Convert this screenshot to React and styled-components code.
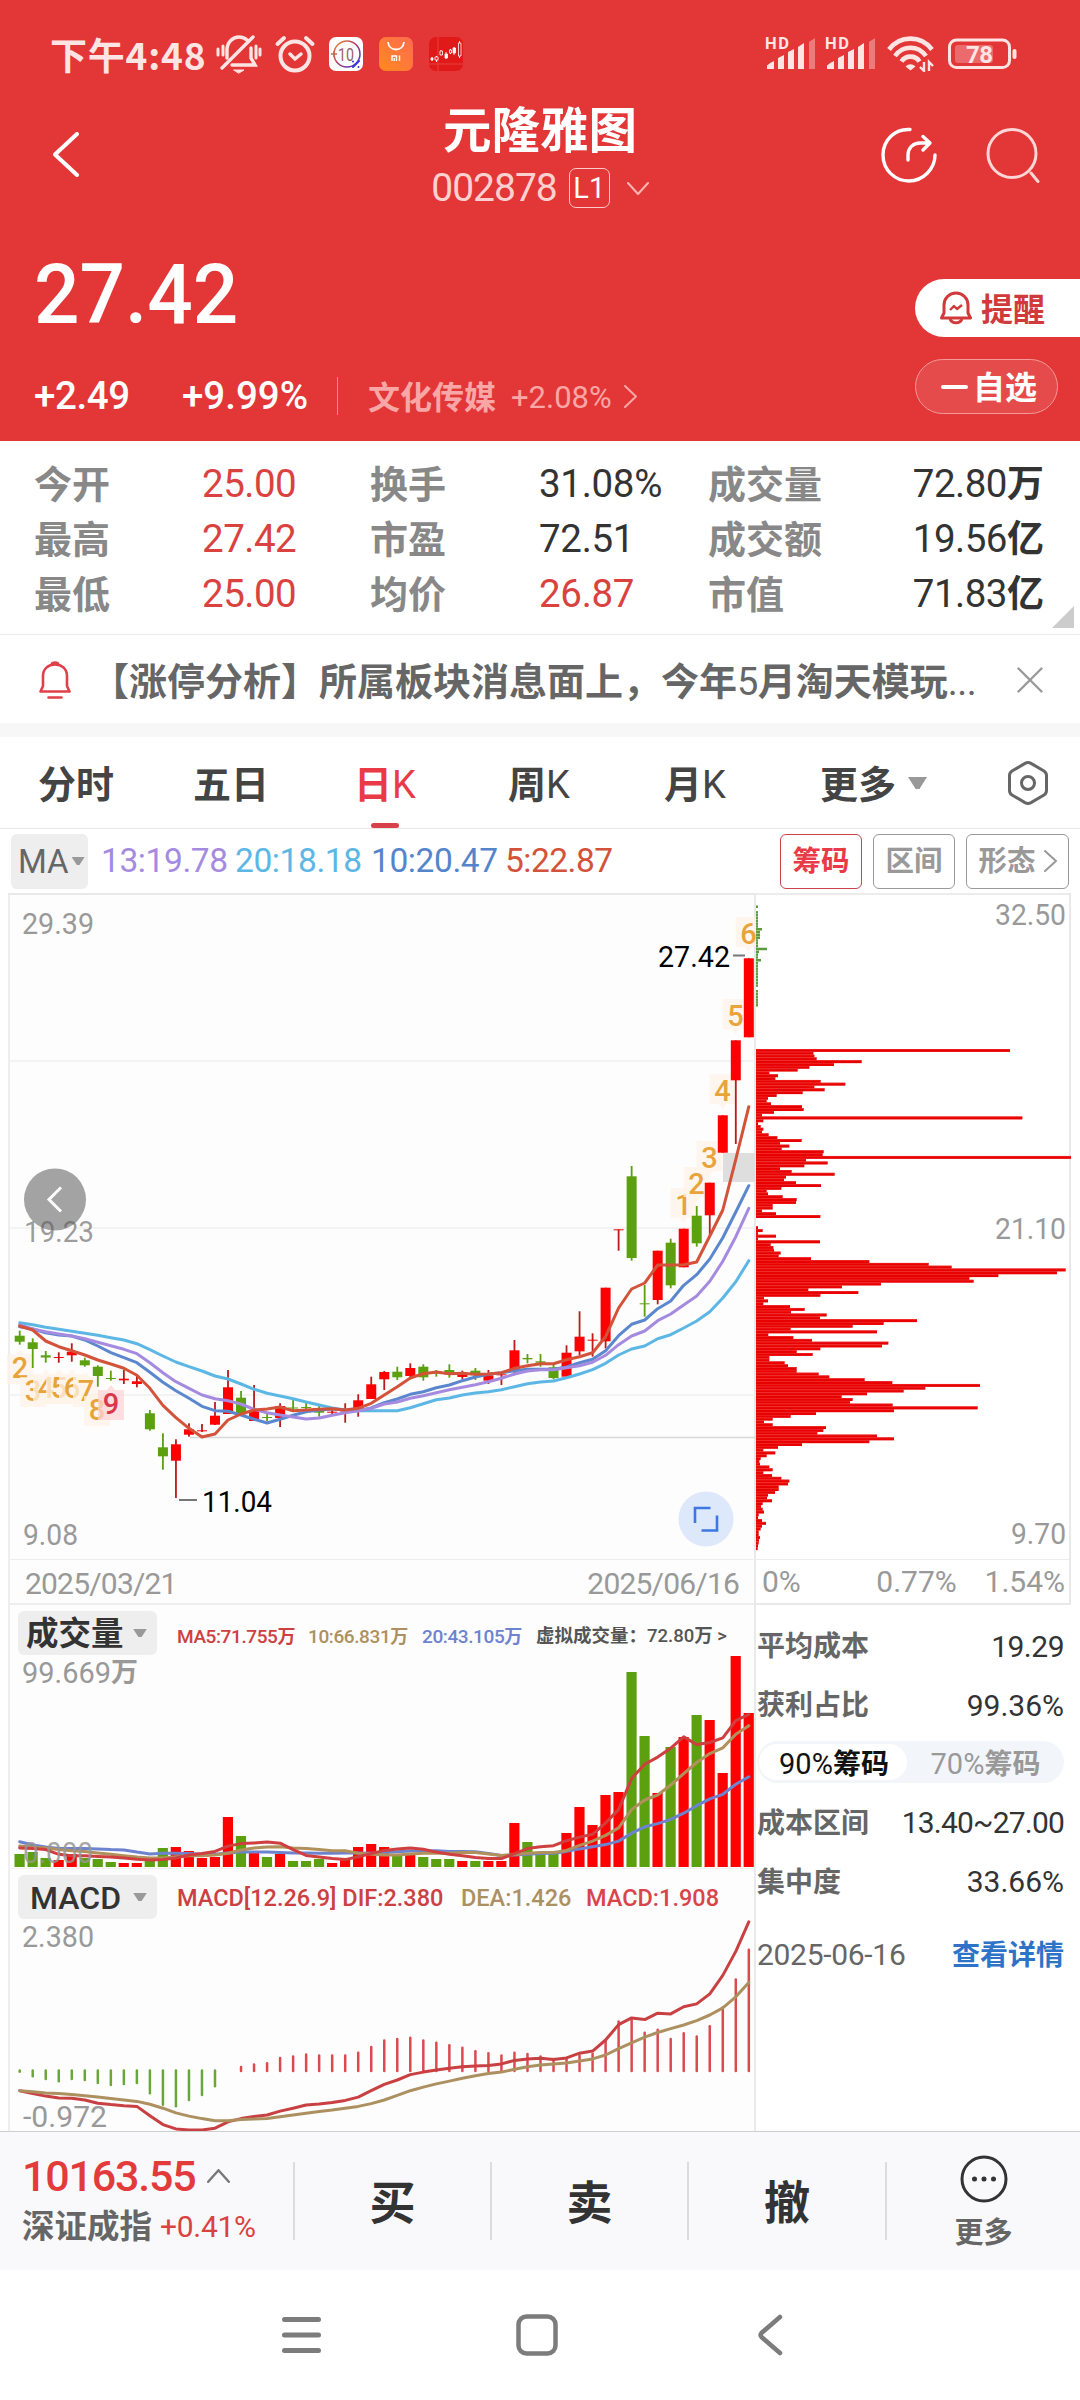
import React from 'react'
import styled, { createGlobalStyle, css } from 'styled-components'

const GlobalStyle = createGlobalStyle`
  * {
    box-sizing: border-box;
  }
  body {
    margin: 0;
    background: #fff;
    font-family: Roboto, 'Noto Sans CJK SC', sans-serif;
    font-weight: 400;
    color: #333;
  }
  svg {
    display: block;
    flex: none;
  }
`

const Screen = styled.div`
  width: 1080px;
  height: 2400px;
  overflow: hidden;
  display: flex;
  flex-direction: column;
`

/* text piece: size, tracking, colour, fixed width, nudge down */
const Piece = styled.span`
  display: block;
  font-size: ${({ $size }) => ($size ? `${$size}px` : 'inherit')};
  line-height: 1;
  letter-spacing: ${({ $ls }) => $ls || 0}px;
  font-weight: ${({ $w }) => $w || 400};
  color: ${({ $color }) => $color || 'inherit'};
  width: ${({ $width }) => ($width ? `${$width}px` : 'auto')};
  padding-top: ${({ $down }) => $down || 0}px;
  white-space: nowrap;
`

const Han = styled.b`
  font-family: 'Noto Sans CJK SC', sans-serif;
  font-size: ${({ $size }) => ($size ? `${$size}px` : 'inherit')};
  font-weight: 700;
  line-height: 1;
  letter-spacing: 0;
`

// chinese runs are set bold, digits and latin stay regular
const Txt = ({ children, $han, ...rest }) => (
  <Piece {...rest}>
    {String(children)
      .split(/([\u3000-\u9fff\uff00-\uffef]+)/)
      .filter(Boolean)
      .map((part, i) =>
        /[\u3000-\u9fff\uff00-\uffef]/.test(part) ? (
          <Han key={i} $size={$han}>
            {part}
          </Han>
        ) : (
          part
        )
      )}
  </Piece>
)

/* ---------- header ---------- */

const Header = styled.header`
  height: 441px;
  background: #e33637;
  color: #fff;
`

const StatusBar = styled.div`
  height: 106px;
  padding: 2px 62px 0 50px;
  display: flex;
  align-items: center;
  justify-content: space-between;
  color: #ffe4e4;
`

const StatusSide = styled.div`
  display: flex;
  align-items: center;
`

const Clock = styled.span`
  font-family: 'Noto Sans CJK SC', sans-serif;
  font-size: 37px;
  line-height: 1;
  font-weight: 700;
  letter-spacing: 0.8px;
  width: 166px;
  white-space: nowrap;
`

const AppBadge = styled.span`
  width: 34px;
  height: 34px;
  margin-left: ${({ $ml }) => $ml || 16}px;
  border-radius: 7px;
  background: ${({ $bg }) => $bg};
  overflow: hidden;
`

const NavBar = styled.div`
  height: 102px;
  padding: 0 40px 0 53px;
  display: grid;
  grid-template-columns: 200px 1fr 200px;
`

const BackCell = styled.div`
  padding-top: 26px;
`

const TitleCell = styled.div`
  display: flex;
  flex-direction: column;
  align-items: center;
  padding: 1px 13px 0 0;
`

const StockName = styled.h1`
  margin: 0;
  font-size: 48.5px;
  line-height: 50px;
  font-weight: 700;
`

const CodeRow = styled.div`
  margin-top: 11px;
  height: 40px;
  display: flex;
  align-items: center;
`

const LevelTag = styled.span`
  width: 41px;
  height: 40px;
  margin: 0 17px 0 12px;
  border: 1px solid #ffc9c9;
  border-radius: 7px;
  display: flex;
  align-items: center;
  justify-content: center;
  font-size: 29px;
`

const IconCell = styled.div`
  display: flex;
  justify-content: flex-end;
  gap: 49px;
  padding-top: 21px;
`

const Quote = styled.div`
  display: flex;
  justify-content: space-between;
  padding-left: 34px;
`

const Price = styled.div`
  margin-top: 45px;
  font-size: 83px;
  font-weight: 500;
  line-height: 84px;
  transform: scaleX(0.965);
  transform-origin: left;
`

const ChangeRow = styled.div`
  height: 40px;
  margin-top: 39px;
  display: flex;
  align-items: center;
`

const Rule = styled.i`
  width: 1px;
  height: 38px;
  background: #f08a8a;
  margin: 0 30px 0 26px;
`

const Actions = styled.div`
  width: 165px;
  padding-top: 71px;
`

const RemindButton = styled.button`
  width: 165px;
  height: 58px;
  border: 0;
  padding: 0 0 0 25px;
  border-radius: 29px 0 0 29px;
  background: #fff;
  color: #d13a3b;
  font-family: inherit;
  display: flex;
  align-items: center;
  gap: 9px;
`

const WatchButton = styled.button`
  width: 143px;
  height: 55px;
  margin-top: 22px;
  padding: 0 0 0 25px;
  border: 1px solid #f39a9a;
  border-radius: 28px;
  background: #e64b4b;
  color: #fff;
  font-family: inherit;
  display: flex;
  align-items: center;
  gap: 5px;
`

/* ---------- stats, notice, tabs ---------- */

const Stats = styled.section`
  height: 194px;
  padding: 15px 36px 0 34px;
  border-bottom: 1px solid #ececec;
  display: grid;
  grid-template-columns: 168px 168px 169px 169px 1fr auto;
  grid-auto-rows: 55px;
  align-items: center;
  position: relative;
`

const Corner = styled.i`
  position: absolute;
  right: 6px;
  bottom: 6px;
  border-left: 22px solid transparent;
  border-bottom: 22px solid #ccc;
`

const Notice = styled.section`
  height: 102px;
  padding: 2px 37px 0 39px;
  display: flex;
  align-items: center;
  border-bottom: 14px solid #f7f7f7;
`

const NoticeText = styled.div`
  margin-left: 20px;
  flex: 1;
  color: #666;
`

const Tabs = styled.nav`
  height: 92px;
  padding-left: 38px;
  border-bottom: 1px solid #e8e8e8;
  display: grid;
  grid-template-columns: 155px 161px 154px 156px 156px 187px 50px;
  align-items: center;
`

const Tab = styled.div`
  height: 91px;
  width: fit-content;
  padding-top: 1px;
  display: flex;
  align-items: center;
  gap: 12px;
  color: ${({ $on }) => ($on ? '#e93b46' : '#444')};
  position: relative;
  ${({ $on }) =>
    $on &&
    css`
      &::after {
        content: '';
        position: absolute;
        left: 17px;
        bottom: 0;
        width: 28px;
        height: 5px;
        border-radius: 3px;
        background: #d8404a;
      }
    `}
`

const Caret = styled.i`
  width: ${({ $w }) => $w}px;
  height: ${({ $w }) => $w * 0.62}px;
  background: #999;
  clip-path: polygon(0 0, 100% 0, 60% 100%, 40% 100%);
`

const MaRow = styled.div`
  height: 64px;
  padding: 0 11px;
  display: flex;
  align-items: center;
`

const MaSelect = styled.div`
  width: 77px;
  height: 55px;
  margin-right: 13px;
  padding-left: 7px;
  border-radius: 6px;
  background: #eee;
  color: #666;
  display: flex;
  align-items: center;
  gap: 3px;
`

const Outline = styled.button`
  width: ${({ $w }) => $w}px;
  height: 55px;
  margin-left: 11px;
  padding: 0;
  border: 1px solid ${({ $on }) => ($on ? '#c9444c' : '#999')};
  border-radius: 6px;
  background: #fff;
  color: ${({ $on }) => ($on ? '#e83b47' : '#999')};
  font-family: inherit;
  display: flex;
  align-items: center;
  justify-content: center;
  gap: 8px;
`

/* ---------- charts ---------- */

const Board = styled.main`
  height: 1238px;
  display: grid;
  grid-template-columns: 756px 315px;
`

const LeftCol = styled.div`
  width: 748px;
  margin-left: 8px;
  border-left: 2px solid #eee;
  border-right: 2px solid #e9e9e9;
  background: #fdfdfd;
`

const Bleed = styled.div`
  margin: 0 -2px 0 -10px;
`

const DateRow = styled.div`
  height: 45px;
  padding: 4px 15px 0;
  border-bottom: 2px solid #eee;
  display: flex;
  align-items: center;
  justify-content: space-between;
  color: #999;
`

const Pane = styled.div`
  height: ${({ $h }) => $h}px;
  position: relative;
`

const PaneHead = styled.div`
  padding: 6px 0 0 8px;
  display: flex;
  align-items: center;
  height: 50px;
  position: relative;
`

const IndicatorSelect = styled.div`
  width: 139px;
  height: 44px;
  padding: 0 10px 0 ${({ $pad }) => $pad}px;
  margin-right: 20px;
  border-radius: 6px;
  background: #eee;
  display: flex;
  align-items: center;
  justify-content: space-between;
`

const PaneChart = styled.div`
  position: absolute;
  left: -10px;
  top: 0;
`

const RightCol = styled.div`
  display: flex;
  flex-direction: column;
`

const ChipAxis = styled.div`
  height: 45px;
  padding: 0 4px 0 6px;
  border-right: 2px solid #e9e9e9;
  border-bottom: 2px solid #e9e9e9;
  display: flex;
  align-items: center;
  justify-content: space-between;
  color: #999;
`

const ChipInfo = styled.div`
  padding: 11px 7px 0 1px;
`

const InfoRow = styled.div`
  height: ${({ $h }) => $h || 59}px;
  display: flex;
  align-items: center;
  justify-content: space-between;
`

const Segment = styled.div`
  width: 307px;
  height: 42px;
  margin: 7px 0 10px;
  padding: 3px 2px;
  border-radius: 21px;
  background: #f2f6fa;
  display: grid;
  grid-template-columns: 148px 1fr;
`

const SegmentItem = styled.div`
  border-radius: 18px;
  padding: 2px 0 0 2px;
  display: flex;
  align-items: center;
  justify-content: center;
  background: ${({ $on }) => ($on ? '#fff' : 'transparent')};
  color: ${({ $on }) => ($on ? '#111' : '#999')};
`

/* ---------- bottom ---------- */

const BottomBar = styled.footer`
  height: 139px;
  background: #f9f9fc;
  border-top: 1px solid #cfcfd2;
  display: grid;
  grid-template-columns: 293px 197px 197px 198px 1fr;
  align-items: center;
`

const IndexCell = styled.div`
  padding-left: 22px;
`

const IndexRow = styled.div`
  height: 50px;
  display: flex;
  align-items: center;
  gap: ${({ $gap }) => $gap}px;
`

const TradeCell = styled.div`
  height: 78px;
  border-left: 2px solid #dcdcde;
  display: flex;
  align-items: center;
  justify-content: center;
`

const MoreCell = styled(TradeCell)`
  flex-direction: column;
  gap: 13px;
  color: #666;
`

const SystemNav = styled.div`
  height: 130px;
  padding: 0 297px 0 282px;
  display: grid;
  grid-template-columns: 234px 1fr auto;
  align-items: center;
`

/* ---------- data ---------- */

const RED = '#fe0000'
const GREEN = '#5ca00f'

// kind, high, body top, body bottom, low
const candles = [
  ['g', 437.7, 442.7, 448.7, 451.7], ['g', 445.3, 449.3, 456, 475], ['g', 458, 462.3, 464.5, 469.7],
  ['r', 459.3, 464, 465, 469.7], ['r', 450.3, 458.7, 462.3, 468.7], ['g', 464.7, 467.3, 472.3, 473.7],
  ['g', 472.3, 473.7, 483, 493.7], ['g', 477.7, 485, 486, 487.7], ['r', 477, 485.7, 487.3, 491],
  ['r', 481, 488.3, 491, 494.3], ['g', 517, 520.3, 536.3, 537.7], ['g', 540.3, 554.3, 563.3, 576.7],
  ['r', 546.3, 551.3, 567.7, 605], ['r', 530.3, 536.3, 541.7, 543.7], ['r', 531, 537.3, 538.3, 539],
  ['r', 509, 522.7, 531.7, 532], ['r', 477, 494.3, 521, 521], ['g', 498, 504.7, 521.3, 521.3],
  ['r', 492, 517, 528, 528], ['g', 521, 524, 525, 528.3], ['r', 510.3, 513, 525, 534],
  ['g', 507, 514.5, 515.5, 518], ['g', 510, 514, 515, 518], ['g', 512.3, 516.3, 519.7, 523.7],
  ['r', 517, 518.7, 519.7, 522], ['r', 510.3, 517, 518.5, 529.7], ['r', 501.3, 507.3, 516.3, 523.7],
  ['r', 483.7, 491.3, 506, 506], ['r', 478, 479, 486.3, 497], ['g', 473.7, 478.7, 484.3, 487],
  ['r', 470.3, 475, 483, 485], ['g', 471.3, 473.7, 484.3, 487.7], ['g', 477, 479.7, 480.7, 483.7],
  ['g', 471.3, 477, 481.7, 484.7], ['r', 477.7, 480.3, 484, 486.3], ['g', 475, 477.7, 482.3, 487],
  ['r', 477, 482.3, 487.7, 491], ['r', 479, 481.3, 482.3, 492], ['r', 447, 457.3, 476.3, 482.3],
  ['g', 461, 465, 466.3, 470.3], ['g', 461, 468.3, 469.7, 473.7], ['g', 472, 474.3, 485, 486.3],
  ['r', 452.3, 459.7, 483.7, 483.7], ['r', 418.3, 443.7, 458.3, 462.3], ['r', 440.3, 446.7, 447.7, 463.7],
  ['r', 394.7, 394.7, 448.3, 455.3], ['r', 336.3, 336.3, 337.3, 357.7], ['g', 273, 283.3, 365, 367.7],
  ['g', 392, 410.3, 411.3, 423.7], ['r', 357.7, 357.7, 407, 411.3], ['g', 345.7, 349.7, 392.3, 395.3],
  ['r', 335.7, 335.7, 374.3, 374.3], ['g', 313, 322.7, 350.3, 353.7], ['r', 289.7, 289.7, 322.3, 342],
  ['r', 222.3, 222.3, 259.7, 259.7], ['r', 147.3, 147.3, 187.3, 251], ['r', 65.3, 65.3, 144.3, 144.3],
]

const priceLines = [
  {
    color: '#5cb7e5',
    data: [429.7, 431.7, 434.3, 436.3, 438.3, 440.3, 442.3, 444.7, 447, 450.7, 456.7, 463, 469, 473.7, 478, 483, 486, 491, 496.3, 500.3, 503, 505.7, 509, 512, 515, 517, 517.7, 517.7, 517.7, 517.7, 514.7, 510.7, 506.7, 505, 502, 500, 498.7, 496.7, 493.7, 490.7, 489, 488, 484.7, 481, 476.7, 470.3, 462, 456, 453, 445.7, 441.7, 435, 428, 418.7, 405, 388.7, 367.7],
  },
  {
    color: '#5a87cd',
    data: [433.7, 436, 439.7, 442, 443, 447, 453, 459.7, 464.7, 469.7, 479.3, 489.3, 497.7, 505.3, 513.3, 517.7, 518.3, 522, 526.3, 530, 526.3, 522.3, 518.7, 517, 516, 517, 517.7, 515, 509.7, 506, 501.3, 498.7, 494.7, 492, 487.7, 484, 481.3, 479.7, 477.7, 476.3, 476.3, 476.3, 474, 469.7, 466.3, 457.7, 442.7, 431.3, 427, 415.7, 408, 392.3, 381.7, 366, 344.7, 319, 292.7],
  },
  {
    color: '#a58be0',
    data: [432, 436, 438.7, 441, 443, 445.7, 449.3, 452.7, 456.3, 460.7, 469.7, 479.7, 488.7, 495.3, 502, 505.7, 507.7, 511, 516.3, 519.7, 522, 524, 526, 525, 522.3, 519.7, 517.7, 515.3, 511, 509, 505.3, 502.7, 499.7, 496.7, 494.3, 491.7, 488.7, 485.3, 481, 478, 476.7, 476.7, 474.7, 472.7, 469.3, 462.3, 451.7, 443, 438, 427.7, 421, 412, 403, 388.3, 368.3, 343.7, 315.3],
  },
  {
    color: '#d3533a',
    data: [433, 437, 448, 453.7, 457.7, 462, 467, 471, 475.3, 482.3, 495.3, 512.3, 524.7, 535.3, 544, 541, 527, 521, 517, 516, 514, 517.7, 517, 516.3, 515.7, 517, 515.3, 510.3, 502, 493.7, 485, 480.7, 479, 480.7, 480.3, 481.3, 481, 479.7, 475.3, 472.7, 470.7, 470.7, 466.7, 463.7, 459.7, 443.7, 415, 396, 390, 372, 372, 371.7, 369, 343, 317, 266.3, 213.7],
  },
]

// label, centre x, centre y, arrow direction
const counts = [
  ['2', 20, 475, 'up'], ['3', 33, 498, 'up'], ['4', 46, 495, 'up'], ['5', 59, 495, 'up'],
  ['6', 72, 495, 'up'], ['7', 86, 498, 'up'], ['8', 97, 517, 'up'],
  ['1', 683.5, 312, 'down'], ['2', 696.5, 291, 'down'], ['3', 709.5, 265, 'down'],
  ['4', 722.5, 198, 'down'], ['5', 735.5, 123, 'down'], ['6', 748.5, 41, 'down'],
]

const volumes = [13, 15, 9, 7, 13, 9, 8, 5, 4, 4, 6, 19, 20, 16, 9, 10, 50, 31, 14, 10, 13, 6, 6, 8, 4, 9, 20, 23, 20, 13, 13, 10, 8, 8, 6, 6, 6, 6, 44, 25, 13, 13, 34, 60, 42, 72, 75, 195, 131, 74, 120, 130, 152, 147, 94, 211, 154]

// indicator series are stored at 2.8 units per pixel
const UNIT = 2.8

const volumeLines = [
  {
    color: '#6d83cf',
    data: [733, 742, 748, 752, 752, 752, 753, 755, 756, 762, 767, 765, 765, 766, 768, 768, 764, 762, 762, 762, 763, 764, 764, 765, 765, 764, 764, 765, 763, 761, 759, 758, 758, 760, 760, 761, 766, 771, 770, 768, 766, 765, 760, 753, 747, 741, 731, 709, 691, 682, 670, 653, 632, 613, 600, 572, 551],
  },
  {
    color: '#b0915c',
    data: [745, 748, 750, 755, 758, 760, 764, 768, 772, 776, 778, 778, 775, 772, 772, 770, 765, 756, 750, 748, 747, 750, 752, 755, 758, 758, 765, 768, 770, 770, 767, 765, 765, 765, 763, 763, 767, 771, 769, 765, 763, 763, 757, 743, 731, 715, 694, 643, 616, 602, 574, 542, 511, 486, 470, 432, 408],
  },
  {
    color: '#cf3f3f',
    data: [750, 752, 755, 768, 772, 772, 774, 776, 778, 782, 784, 783, 778, 770, 766, 760, 745, 738, 736, 734, 737, 755, 771, 776, 780, 783, 775, 766, 757, 753, 750, 754, 762, 768, 772, 777, 780, 780, 766, 752, 747, 744, 730, 720, 712, 680, 643, 556, 516, 496, 471, 439, 461, 455, 442, 394, 376],
  },
]

const macdLow = [1380, 1392, 1400, 1406, 1400, 1403, 1411, 1417, 1414, 1411, 1440, 1472, 1476, 1459, 1445, 1420]
const macdHigh = [1362, 1355, 1352, 1337, 1333, 1327, 1330, 1330, 1330, 1322, 1306, 1288, 1284, 1280, 1288, 1294, 1301, 1308, 1318, 1324, 1330, 1322, 1326, 1333, 1340, 1338, 1330, 1325, 1290, 1235, 1228, 1266, 1258, 1284, 1268, 1277, 1248, 1195, 1117, 1034]

const macdLines = [
  {
    color: '#c94042',
    data: [1430, 1438, 1445, 1450, 1451, 1456, 1465, 1469, 1472, 1474, 1500, 1525, 1537, 1540, 1540, 1535, 1517, 1508, 1502, 1498, 1487, 1479, 1470, 1467, 1463, 1457, 1448, 1430, 1412, 1400, 1385, 1378, 1372, 1367, 1363, 1361, 1359, 1355, 1345, 1341, 1339, 1343, 1338, 1325, 1319, 1288, 1245, 1226, 1231, 1213, 1215, 1195, 1187, 1159, 1107, 1040, 957],
  },
  {
    color: '#ad9060',
    data: [1430, 1433, 1436, 1438, 1441, 1444, 1448, 1452, 1456, 1460, 1468, 1479, 1492, 1501, 1508, 1514, 1514, 1511, 1509, 1508, 1503, 1498, 1493, 1488, 1484, 1479, 1474, 1466, 1456, 1443, 1430, 1420, 1411, 1403, 1395, 1388, 1382, 1378, 1370, 1363, 1358, 1355, 1352, 1347, 1341, 1330, 1312, 1296, 1280, 1267, 1256, 1246, 1234, 1218, 1198, 1167, 1127],
  },
]

// share of holdings per price level, three units per pixel
const chips = [
  762, 172, 175, 182, 317, 234, 160, 125, 40, 66, 58, 194, 268, 175, 206, 140, 62, 36, 32, 45,
  138, 143, 54, 18, 799, 22, 6, 14, 22, 18, 38, 64, 137, 72, 100, 77, 203, 200, 945, 150,
  215, 145, 72, 107, 236, 90, 84, 120, 195, 76, 32, 36, 80, 122, 120, 50, 50, 18, 60, 193,
  0, 0, 0, 6, 20, 6, 60, 6, 192, 44, 52, 54, 74, 68, 165, 340, 518, 587, 929, 903,
  727, 640, 653, 375, 258, 157, 307, 193, 24, 36, 22, 102, 146, 105, 212, 192, 483, 383, 290, 104,
  363, 37, 112, 168, 397, 378, 193, 122, 170, 40, 40, 86, 96, 122, 122, 188, 220, 326, 409, 672,
  508, 443, 333, 257, 290, 282, 410, 665, 414, 180, 104, 50, 24, 50, 210, 202, 184, 363, 414, 340,
  138, 66, 22, 58, 32, 14, 10, 12, 40, 50, 22, 48, 76, 100, 96, 68, 68, 57, 36, 33,
  48, 20, 15, 20, 24, 8, 6, 18, 30, 18, 14, 8, 8, 12, 9, 8, 6, 5,
]

const trapped = [2, 0, 2, 2, 2, 2, 2, 2, 6, 4, 4, 4, 2, 2, 2, 11, 3, 2, 2, 5, 2, 2, 2, 2, 2, 2, 2, 2, 2, 0, 2, 2, 2, 2, 2, 2]

const stats = [
  ['今开', '25.00', 'r', '换手', '31.08%', '', '成交量', '72.80万'],
  ['最高', '27.42', 'r', '市盈', '72.51', '', '成交额', '19.56亿'],
  ['最低', '25.00', 'r', '均价', '26.87', 'r', '市值', '71.83亿'],
]

const x = (i) => 19.7 + i * 13.02
const points = (data, unit = 1, top = 0) => data.map((v, i) => `${x(i).toFixed(1)},${(v / unit - top).toFixed(1)}`).join(' ')

const Lines = ({ items, unit, top }) =>
  items.map((l) => (
    <polyline key={l.color} points={points(l.data, unit, top)} fill="none" stroke={l.color} strokeWidth="3" strokeLinejoin="round" strokeLinecap="round" />
  ))

const Label = ({ at, y, w, color = '#999', size = 30, children }) => (
  <text x={at} y={y} fontSize={size} fill={color} textLength={w} lengthAdjust="spacingAndGlyphs">
    {children}
  </text>
)

/* ---------- icons ---------- */

const Signal = () => (
  <svg width="52" height="40" viewBox="0 -2 52 40" fill="currentColor" overflow="visible">
    <text x="0" y="13" fontSize="16.500" fontWeight="700" textLength="24">HD</text>
    <path d="M2 33v-3.500q3-3 7-4.500v8zM13 33V22l6-3v14zM23 33V16l6-3v20zM33 33V11l6-4v26z" />
    <path d="M44 33V6l6-4v31z" opacity=".4" />
  </svg>
)

const StatusIcons = () => (
  <>
    <svg width="46" height="40" viewBox="0 0 46 40" fill="none" stroke="currentColor" strokeWidth="3.400" strokeLinecap="round">
      <path d="M11 24v-8C11 8 17 3 23 3c3 0 6 1 8 3M35 14v10l4 7H16M37 3 6 34" />
      <path d="M2 15v6M7 12v9M40 12v12M44 15v6" strokeWidth="3" />
      <path d="M18 36h10l-5 3z" fill="currentColor" strokeWidth="1" />
    </svg>
    <svg width="66" height="38" viewBox="-13 0 66 38" fill="none" stroke="currentColor" strokeWidth="4" strokeLinecap="round">
      <circle cx="20" cy="21" r="14.500" />
      <path d="m15 19 5 5 6-5" strokeWidth="3.500" />
      <path d="M2.500 9 9 3M37.500 9 31 3" />
    </svg>
    <AppBadge $bg="#fff" $ml={1}>
      <svg width="34" height="34" viewBox="0 0 34 34">
        <defs>
          <linearGradient id="ring" x1="0" y1="0" x2="1" y2="1">
            <stop offset="0" stopColor="#e8902c" />
            <stop offset=".5" stopColor="#b0386c" />
            <stop offset="1" stopColor="#3a35d8" />
          </linearGradient>
        </defs>
        <circle cx="18" cy="17" r="13" fill="none" stroke="url(#ring)" strokeWidth="1.500" />
        <text x="9" y="24" fontSize="19" fill="#a0606a" textLength="16" lengthAdjust="spacingAndGlyphs">10</text>
        <path d="M2 17h6M5 14v6" stroke="#c46a4a" strokeWidth="1.400" />
        <path d="m24 30 6-6M24 24.500h.01M29.500 30h.01" stroke="#3a35d8" strokeWidth="2" strokeLinecap="round" />
      </svg>
    </AppBadge>
    <AppBadge $bg="linear-gradient(45deg, #ff8a1e, #ff6a50)">
      <svg width="34" height="34" viewBox="0 0 34 34" fill="none" stroke="#fff" strokeWidth="1.800">
        <path d="M9 5c1 10 15 10 16 0" />
        <path d="M13 24v-5h4.500v5M15.200 21v3M20.500 18.500V24" strokeWidth="1.400" />
      </svg>
    </AppBadge>
    <AppBadge $bg="#e01919">
      <svg width="34" height="34" viewBox="0 0 34 34" stroke="#fff" fill="#fff">
        <path d="M0 27h34M9 0v34" stroke="#e85050" strokeWidth=".7" />
        <path d="M3 20v4M7.500 19v6M12 13v5M17 15v7M21.500 12v5M25 10v8M30.500 4v17" strokeWidth=".9" />
        <path d="M2 21h2v2H2zM16 17h2.500v4H16zM24 11h2.500v5H24z" strokeWidth=".8" />
        <path d="M6 20h3v3H6zM11 14h2.500v4H11zM20.500 13h2v3h-2zM29.500 6h2.500v13h-2.500z" fill="#e01414" strokeWidth=".8" />
      </svg>
    </AppBadge>
  </>
)

const Wifi = () => (
  <svg width="48" height="36" viewBox="0 0 48 36" fill="none" stroke="currentColor" strokeWidth="4.600">
    <path d="M2 13.500C13-1 34-1 45 13.500M8 20C16 9 31 9 39 20M14.500 25.500c4-6.500 14-6.500 18 0" />
    <path d="m18.500 30.500 5 4 5-4q-5-4.500-10 0z" fill="currentColor" stroke="none" />
    <path d="M37 26v9l-4-4M42 35v-9l4 4" strokeWidth="2.400" />
  </svg>
)

const Battery = () => (
  <svg width="70" height="32" viewBox="0 0 70 32" fill="none">
    <rect x="1.500" y="2" width="60" height="27.500" rx="7" stroke="currentColor" strokeWidth="3" />
    <rect x="7" y="7" width="38" height="18" rx="3" fill="currentColor" opacity=".3" />
    <rect x="64.500" y="11" width="4" height="10" rx="2" fill="currentColor" />
    <text x="18" y="24.500" fontSize="24" fontWeight="700" fill="currentColor" textLength="27">78</text>
  </svg>
)

const Chevron = ({ w, h, sw, dir, color = 'currentColor' }) => {
  const p = sw / 2
  const d = {
    left: `M${w - p} ${p} ${p} ${h / 2} ${w - p} ${h - p}`,
    right: `M${p} ${p} ${w - p} ${h / 2} ${p} ${h - p}`,
    down: `M${p} ${p} ${w / 2} ${h - p} ${w - p} ${p}`,
    up: `M${p} ${h - p} ${w / 2} ${p} ${w - p} ${h - p}`,
  }[dir]
  return (
    <svg width={w} height={h} viewBox={`0 0 ${w} ${h}`} fill="none" stroke={color} strokeWidth={sw} strokeLinecap="round" strokeLinejoin="round">
      <path d={d} />
    </svg>
  )
}

/* ---------- chart panes ---------- */

const CountTag = ({ label, cx, cy, dir, hot }) => (
  <g>
    <path
      d={
        dir === 'up'
          ? `M${cx - 13} ${cy - 14}h9l4-5 4 5h9v30h-26z`
          : `M${cx - 13} ${cy - 17}h26v30h-9l-4 5-4-5h-9z`
      }
      fill={hot ? '#fcd3d7' : '#fdf3e8'}
      opacity=".75"
    />
    <text x={cx} y={cy + 10} fontSize="29" fontWeight="500" textAnchor="middle" fill={hot ? '#d9384a' : '#e9a33b'}>
      {label}
    </text>
  </g>
)

const KLine = () => (
  <svg width="756" height="667" viewBox="0 0 756 667">
    <g stroke="#f0f0f0" strokeWidth="1.500">
      <path d="M8 1h748" stroke="#e9e9e9" strokeWidth="2" />
      <path d="M8 168h748M8 335h748M8 502h748" />
      <path d="M8 667h748" stroke="#eee" strokeWidth="2" />
    </g>
    <path d="M190 544.500h566" stroke="#d8d8d8" strokeWidth="1.500" />
    <rect x="723" y="260" width="32" height="29" fill="#dedede" />
    <Label at="22" y="41" w="72">29.39</Label>
    <Label at="23" y="651.5" w="55">9.08</Label>
    {counts.map(([label, cx, cy, dir]) => (
      <CountTag key={cx} label={label} cx={cx} cy={cy} dir={dir} />
    ))}
    <CountTag label="9" cx={111} cy={511} dir="up" hot />
    {candles.map(([kind, high, top, bottom, low], i) => (
      <g key={i} fill={kind === 'r' ? RED : GREEN}>
        <rect x={x(i) - 0.9} y={high} width="1.8" height={low - high} fill={kind === 'r' ? '#b81c1c' : GREEN} />
        <rect x={x(i) - 5} y={top} width="10" height={bottom - top} />
      </g>
    ))}
    <Lines items={priceLines} />
    <path d="M733 62.500h12M179 607h18" stroke="#777" strokeWidth="2" />
    <Label at="658" y="74" w="72" color="#000">27.42</Label>
    <Label at="202" y="619" w="70" color="#000">11.04</Label>
    <circle cx="55" cy="306.500" r="31" fill="#a3a3a3" />
    <path d="m61 294.500-12 12 12 12" fill="none" stroke="#fff" strokeWidth="3" />
    <Label at="24" y="349" w="70" color="rgba(90,90,90,.6)">19.23</Label>
    <circle cx="706" cy="626" r="27.5" fill="#dee8fb" />
    <path d="M695 630v-15h15.500M717 622.500V637.500h-15.500" fill="none" stroke="#3b78e0" strokeWidth="2.600" />
  </svg>
)

const VolumeChart = () => (
  <svg width="756" height="264" viewBox="0 0 756 264">
    {volumes.map((v, i) => (
      <rect key={i} x={x(i) - 5.2} y={262 - v} width="10.2" height={v} fill={candles[i][0] === 'r' ? RED : GREEN} />
    ))}
    <path d="M8 263.500h748" stroke="#f0f0f0" />
    <Lines items={volumeLines} unit={UNIT} top={25} />
    <Label at="22" y="78" w="89">99.669</Label>
    <text x="111" y="77" fontSize="27" fontWeight="700" fill="#999" fontFamily="'Noto Sans CJK SC', sans-serif">万</text>
    <Label at="23" y="258" w="70" color="rgba(150,150,150,.85)">0.000</Label>
  </svg>
)

const MacdChart = () => (
  <svg width="756" height="262" viewBox="0 0 756 262">
    <Label at="22" y="78" w="72">2.380</Label>
    <Label at="23" y="258" w="84" size={29}>-0.972</Label>
    <g strokeWidth="2.500" strokeLinecap="round">
      {macdLow.map((v, i) => (
        <path key={i} d={`M${x(i)} 201.500V${v / UNIT - 290}`} stroke="#6ba63c" />
      ))}
      {macdHigh.map((v, i) => (
        <path key={i} d={`M${x(i + 17)} 202V${v / UNIT - 288.5}`} stroke="#db4a4f" />
      ))}
    </g>
    <Lines items={macdLines} unit={UNIT} top={289} />
  </svg>
)

const ChipChart = () => (
  <svg width="315" height="667" viewBox="0 0 315 667">
    <path d="M0 1h315" stroke="#ececec" strokeWidth="2" />
    <path d="M314 0v667" stroke="#e9e9e9" strokeWidth="2" />
    <path d="M0 666.500h315" stroke="#ececec" />
    {trapped.map((w, i) => (
      <rect key={i} x="0" y={12.5 + i * 2.815} width={w} height="2.5" fill="#5c9c3c" />
    ))}
    {chips.map((w, i) => (
      <g key={i}>
        <rect x="0" y={156 + i * 2.815} width={w / 3} height="2.9" fill="#e80000" />
        <rect x="0" y={156 + i * 2.815} width={w / 3} height=".7" fill="#f02828" />
      </g>
    ))}
    <Label at="239" y="32" w="71">32.50</Label>
    <Label at="239" y="346" w="71">21.10</Label>
    <Label at="255" y="651" w="55">9.70</Label>
  </svg>
)

const Gap = styled.i`
  width: ${({ $w }) => $w}px;
`

const App = () => {
  return (
    <Screen>
      <GlobalStyle />
      <Header>
        <StatusBar>
          <StatusSide>
            <Clock>下午4:48</Clock>
            <StatusIcons />
          </StatusSide>
          <StatusSide>
            <Signal />
            <Gap $w={8} />
            <Signal />
            <Gap $w={10} />
            <Wifi />
            <Gap $w={13} />
            <Battery />
          </StatusSide>
        </StatusBar>
        <NavBar>
          <BackCell>
            <Chevron w={26} h={45} sw={4} dir="left" />
          </BackCell>
          <TitleCell>
            <StockName>元隆雅图</StockName>
            <CodeRow>
              <Txt $size={39} $color="#ffd0d0" $ls={-1}>002878</Txt>
              <LevelTag>L1</LevelTag>
              <Chevron w={22} h={13} sw={2} dir="down" color="#ffb4b4" />
            </CodeRow>
          </TitleCell>
          <IconCell>
            <svg width="56" height="56" viewBox="0 0 56 56" fill="none" stroke="#fff" strokeWidth="3.400" strokeLinecap="round" strokeLinejoin="round">
              <path d="M29 2.500C14 1.500 2 13 2 28s12 26 26 26 26-12 26-26" />
              <path d="M27 33v-5c0-7 5-12 12-12h9M42 9.500l7 6.500-7 7" />
            </svg>
            <svg width="54" height="56" viewBox="0 0 54 56" fill="none" stroke="#ffd6d6" strokeWidth="3" strokeLinecap="round">
              <circle cx="26" cy="26.500" r="24" />
              <path d="m45 46 7 8.500" />
            </svg>
          </IconCell>
        </NavBar>
        <Quote>
          <div>
            <Price>27.42</Price>
            <ChangeRow>
              <Txt $size={38.5} $width={148} $ls={-0.4} $w={500}>+2.49</Txt>
              <Txt $size={38.5} $w={500} $width={129}>+9.99%</Txt>
              <Rule />
              <Txt $size={32} $color="#f9a6a6">文化传媒</Txt>
              <Gap $w={15} />
              <Txt $size={31} $color="#f9a6a6" $down={2} $width={113}>+2.08%</Txt>
              <Chevron w={13} h={23} sw={2} dir="right" color="#f9a6a6" />
            </ChangeRow>
          </div>
          <Actions>
            <RemindButton>
              <svg width="32" height="34" viewBox="0 0 32 34" fill="none" stroke="currentColor" strokeWidth="3" strokeLinejoin="round">
                <path d="M4 22V14a12 12 0 0 1 24 0v8l2.500 5h-29z" />
                <path d="M10 28c2 5 10 5 12 0" />
                <path d="m10 19 4-4 3 3 5-4" strokeWidth="2.400" />
              </svg>
              <Txt $size={32}>提醒</Txt>
            </RemindButton>
            <WatchButton>
              <svg width="27" height="4">
                <rect width="27" height="4" rx="2" fill="#fff" />
              </svg>
              <Txt $size={32}>自选</Txt>
            </WatchButton>
          </Actions>
        </Quote>
      </Header>

      <Stats>
        {stats.map(([a, av, ar, b, bv, br, c, cv]) => (
          <React.Fragment key={a}>
            <Txt $size={38} $color="#888">{a}</Txt>
            <Txt $size={38.5} $ls={-0.5} $down={1} $color={ar && '#da423f'}>{av}</Txt>
            <Txt $size={38} $color="#888">{b}</Txt>
            <Txt $size={38.5} $ls={-0.3} $down={1} $color={br && '#da423f'}>{bv}</Txt>
            <Txt $size={38} $color="#888">{c}</Txt>
            <Txt $size={38.5} $ls={-0.5} $han={37}>{cv}</Txt>
          </React.Fragment>
        ))}
        <Corner />
      </Stats>

      <Notice>
        <svg width="32" height="38" viewBox="0 0 32 38" fill="none" stroke="#e0404a" strokeWidth="2.600" strokeLinecap="round" strokeLinejoin="round">
          <path d="M4 25V15C4 8 9 3.500 16 3.500S28 8 28 15v10l2.500 5.500h-29z" />
          <path d="M13 3c0-2 6-2 6 0M9.500 36.500h13" />
        </svg>
        <NoticeText>
          <Txt $size={38} $ls={-0.6}>【涨停分析】所属板块消息面上，今年5月淘天模玩...</Txt>
        </NoticeText>
        <svg width="26" height="26" viewBox="0 0 26 26" stroke="#999" strokeWidth="2.400" strokeLinecap="round">
          <path d="m1.500 1.500 23 23M24.500 1.500l-23 23" />
        </svg>
      </Notice>

      <Tabs>
        {['分时', '五日', '日K', '周K', '月K'].map((name) => (
          <Tab key={name} $on={name === '日K'}>
            <Txt $size={38}>{name}</Txt>
          </Tab>
        ))}
        <Tab>
          <Txt $size={38}>更多</Txt>
          <Caret $w={19} />
        </Tab>
        <svg width="42" height="46" viewBox="0 0 42 46" fill="none" stroke="#666" strokeWidth="3">
          <path d="M18 3.400q3-1.600 6 0l13 7.600q2.500 1.600 2.500 4.500v15q0 2.900-2.500 4.500l-13 7.600q-3 1.600-6 0L5 35q-2.500-1.600-2.500-4.500v-15q0-2.900 2.500-4.500z" />
          <circle cx="21" cy="23" r="6.500" />
        </svg>
      </Tabs>

      <MaRow>
        <MaSelect>
          <Txt $size={33}>MA</Txt>
          <Caret $w={13} />
        </MaSelect>
        <Txt $size={33.5} $width={134} $ls={-0.4} $color="#a58be0">13:19.78</Txt>
        <Txt $size={33.5} $width={136} $ls={-0.4} $color="#5cb7e5">20:18.18</Txt>
        <Txt $size={33.5} $width={134} $ls={-0.4} $color="#5485cc">10:20.47</Txt>
        <Txt $size={33.5} $width={264} $ls={-0.5} $color="#d3533a">5:22.87</Txt>
        <Outline $w={82} $on>
          <Txt $size={28.5}>筹码</Txt>
        </Outline>
        <Outline $w={82}>
          <Txt $size={28.5}>区间</Txt>
        </Outline>
        <Outline $w={103}>
          <Txt $size={28.5}>形态</Txt>
          <Chevron w={13} h={22} sw={2} dir="right" />
        </Outline>
      </MaRow>

      <Board>
        <LeftCol>
          <Bleed>
            <KLine />
          </Bleed>
          <DateRow>
            <Txt $size={30} $ls={-0.8}>2025/03/21</Txt>
            <Txt $size={30} $ls={-0.8}>2025/06/16</Txt>
          </DateRow>
          <Pane $h={264}>
            <PaneChart>
              <VolumeChart />
            </PaneChart>
            <PaneHead>
              <IndicatorSelect $pad={8}>
                <Txt $size={32.5}>成交量</Txt>
                <Caret $w={14} />
              </IndicatorSelect>
              <Txt $size={19} $w={500} $han={18} $ls={-0.4} $down={5} $color="#cc4042" $width={131}>MA5:71.755万</Txt>
              <Txt $size={19} $w={500} $han={18} $ls={-0.4} $down={5} $color="#ad9060" $width={114}>10:66.831万</Txt>
              <Txt $size={19} $w={500} $han={18} $ls={-0.4} $down={5} $color="#6d83cf" $width={114}>20:43.105万</Txt>
              <Txt $size={18.5} $w={500} $down={5} $color="#555">{'虚拟成交量：72.80万 >'}</Txt>
            </PaneHead>
          </Pane>
          <Pane $h={262}>
            <PaneChart>
              <MacdChart />
            </PaneChart>
            <PaneHead>
              <IndicatorSelect $pad={12}>
                <Txt $size={32} $w={500} $down={2}>MACD</Txt>
                <Caret $w={14} />
              </IndicatorSelect>
              <Txt $size={23.5} $w={500} $down={4} $color="#cc4042" $width={284}>MACD[12.26.9] DIF:2.380</Txt>
              <Txt $size={23.5} $w={500} $down={4} $color="#ad9060" $width={125}>DEA:1.426</Txt>
              <Txt $size={23.5} $w={500} $down={4} $color="#d9444a">MACD:1.908</Txt>
            </PaneHead>
          </Pane>
        </LeftCol>
        <RightCol>
          <ChipChart />
          <ChipAxis>
            <Txt $size={30}>0%</Txt>
            <Gap $w={20} />
            <Txt $size={30}>0.77%</Txt>
            <Txt $size={30}>1.54%</Txt>
          </ChipAxis>
          <ChipInfo>
            <InfoRow>
              <Txt $size={28} $color="#666">平均成本</Txt>
              <Txt $size={30} $ls={-0.5} $down={3}>19.29</Txt>
            </InfoRow>
            <InfoRow>
              <Txt $size={28} $color="#666">获利占比</Txt>
              <Txt $size={30} $down={3}>99.36%</Txt>
            </InfoRow>
            <Segment>
              <SegmentItem $on>
                <Txt $size={29} $han={28}>90%筹码</Txt>
              </SegmentItem>
              <SegmentItem>
                <Txt $size={29} $han={28}>70%筹码</Txt>
              </SegmentItem>
            </Segment>
            <InfoRow>
              <Txt $size={28} $color="#666">成本区间</Txt>
              <Txt $size={30} $ls={-0.8}>13.40~27.00</Txt>
            </InfoRow>
            <InfoRow>
              <Txt $size={28} $color="#666">集中度</Txt>
              <Txt $size={30}>33.66%</Txt>
            </InfoRow>
            <InfoRow $h={87}>
              <Txt $size={30} $ls={-0.3} $color="#666">2025-06-16</Txt>
              <Txt $size={28} $color="#2d73c8">查看详情</Txt>
            </InfoRow>
          </ChipInfo>
        </RightCol>
      </Board>

      <BottomBar>
        <IndexCell>
          <IndexRow $gap={12}>
            <Txt $size={43} $ls={-1.2} $w={500} $color="#e33b3c">10163.55</Txt>
            <Chevron w={23} h={14} sw={2.4} dir="up" color="#777" />
          </IndexRow>
          <IndexRow $gap={8}>
            <Txt $size={32.5} $color="#666">深证成指</Txt>
            <Txt $size={30} $down={2} $ls={-0.3} $color="#da423f">+0.41%</Txt>
          </IndexRow>
        </IndexCell>
        <TradeCell>
          <Txt $size={46}>买</Txt>
        </TradeCell>
        <TradeCell>
          <Txt $size={46}>卖</Txt>
        </TradeCell>
        <TradeCell>
          <Txt $size={46}>撤</Txt>
        </TradeCell>
        <MoreCell>
          <svg width="48" height="48" viewBox="0 0 48 48" fill="none" stroke="#333" strokeWidth="3">
            <circle cx="24" cy="24" r="22" />
            <path d="M14.500 24h.01M24 24h.01M33.500 24h.01" strokeWidth="5" strokeLinecap="round" />
          </svg>
          <Txt $size={29}>更多</Txt>
        </MoreCell>
      </BottomBar>

      <SystemNav>
        <svg width="39" height="36" viewBox="0 0 39 36" stroke="#7c7c7c" strokeWidth="5" strokeLinecap="round">
          <path d="M2.500 2.500h34M2.500 18h34M2.500 33.500h34" />
        </svg>
        <svg width="42" height="42" viewBox="0 0 42 42" fill="none" stroke="#7c7c7c" strokeWidth="4.500">
          <rect x="2.500" y="2.500" width="37" height="37" rx="8" />
        </svg>
        <svg width="26" height="42" viewBox="0 0 26 42" fill="none" stroke="#7c7c7c" strokeWidth="4.500" strokeLinecap="round">
          <path d="M23 3 4.500 19q-2 2 0 4L23 39" />
        </svg>
      </SystemNav>
    </Screen>
  )
}

export default App
